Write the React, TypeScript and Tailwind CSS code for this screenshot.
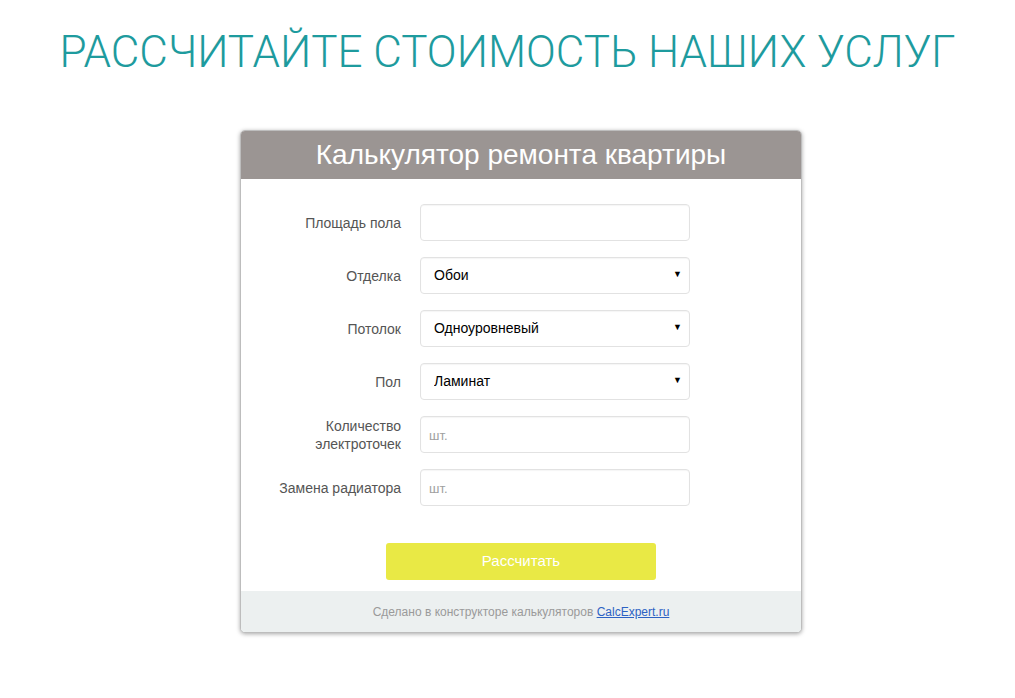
import { useState } from 'react';

// ─── Calculator rows ──────────────────────────────────────────────────────────
type Row =
  | { label: string[]; kind: 'input'; placeholder?: string }
  | { label: string[]; kind: 'select'; options: string[] };

const ROWS: Row[] = [
  { label: ['Площадь пола'], kind: 'input' },
  { label: ['Отделка'], kind: 'select', options: ['Обои', 'Покраска', 'Штукатурка'] },
  { label: ['Потолок'], kind: 'select', options: ['Одноуровневый', 'Многоуровневый', 'Натяжной'] },
  { label: ['Пол'], kind: 'select', options: ['Ламинат', 'Паркет', 'Плитка'] },
  { label: ['Количество', 'электроточек'], kind: 'input', placeholder: 'шт.' },
  { label: ['Замена радиатора'], kind: 'input', placeholder: 'шт.' },
];

const fieldCls =
  'w-[270px] h-[37px] rounded-[4px] border border-[#e2e2e2] bg-white shadow-[inset_0_1px_1px_rgba(0,0,0,0.04)] outline-none';

function Field({ row }: { row: Row }) {
  const [value, setValue] = useState('');

  if (row.kind === 'select') {
    return (
      <div className="relative">
        <select
          className={`${fieldCls} appearance-none pl-[13px] text-[14px] text-black`}
          defaultValue={row.options[0]}
        >
          {row.options.map((o) => (
            <option key={o}>{o}</option>
          ))}
        </select>
        <span className="pointer-events-none absolute right-[8px] top-[11px] text-[9px] text-black">▼</span>
      </div>
    );
  }

  return (
    <input
      value={value}
      onChange={(e) => setValue(e.target.value)}
      placeholder={row.placeholder}
      className={`${fieldCls} px-[8px] text-[14px] text-black placeholder:text-[13px] placeholder:text-[#a0a0a0]`}
    />
  );
}

export default function App() {
  return (
    <div className="min-h-screen bg-white font-['Liberation_Sans',Arial,sans-serif]">
      {/* ── Heading ── */}
      <h1 className="pt-[30px] text-center font-['Roboto',sans-serif] text-[44px] font-light leading-[44px] text-[#1e9b9e]">
        РАССЧИТАЙТЕ СТОИМОСТЬ НАШИХ УСЛУГ
      </h1>

      {/* ── Calculator card ── */}
      <div className="mt-[56px] flex justify-center pl-[27px]">
        <div className="w-[562px] overflow-hidden rounded-[5px] border border-[#bdbdbd] bg-white shadow-[0_1px_4px_rgba(0,0,0,0.35)]">
          <div className="flex h-[48px] items-center justify-center bg-[#9b9593] text-[28px] text-white">
            Калькулятор ремонта квартиры
          </div>

          <div className="flex flex-col gap-[16px] pt-[25px]">
            {ROWS.map((row) => (
              <div key={row.label.join(' ')} className="flex items-center gap-[19px]">
                <div className="w-[160px] text-right text-[14px] leading-[18px] text-[#555]">
                  {row.label.map((l) => (
                    <div key={l}>{l}</div>
                  ))}
                </div>
                <Field row={row} />
              </div>
            ))}
          </div>

          <div className="flex justify-center pt-[37px] pb-[11px]">
            <button className="h-[37px] w-[270px] rounded-[3px] bg-[#e9e945] text-[15px] text-white">
              Рассчитать
            </button>
          </div>

          <div className="flex h-[41px] items-center justify-center bg-[#ecf0f0] text-[12px] text-[#9a9a9a]">
            Сделано в конструкторе калькуляторов&nbsp;
            <a href="#" className="text-[#2d62c4] underline">
              CalcExpert.ru
            </a>
          </div>
        </div>
      </div>
    </div>
  );
}
